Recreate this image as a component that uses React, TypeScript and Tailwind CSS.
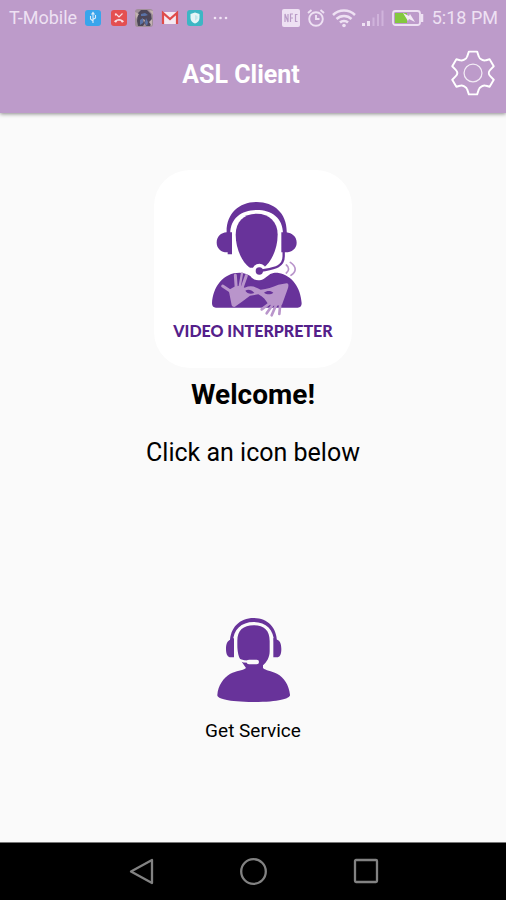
import React from "react";

function StatusIcons() {
  return (
    <div className="flex items-center gap-2">
      {/* usb */}
      <svg className="h-4 w-4" viewBox="0 0 16 16">
        <rect width="16" height="16" rx="3" fill="#38a5ec" />
        <path d="M8 3v10M5.500 6v3L8 11M10.500 5v3L8 9.500M6.500 4.500L8 2.500l1.500 2" fill="none" stroke="#d9ecfb" strokeWidth="1.100" />
      </svg>
      {/* missed call */}
      <svg className="ml-0.5 h-4 w-4" viewBox="0 0 16 16">
        <rect width="16" height="16" rx="3" fill="#e44f50" />
        <path d="M4.500 3.500L8 7l3.500-3.500M4.500 3.500v2" fill="none" stroke="#f8dfe3" strokeWidth="1.200" />
        <path d="M3 11.500c2-3.500 8-3.500 10 0l-2 1.200-1.500-2h-3l-1.500 2z" fill="#f8dfe3" />
      </svg>
      {/* game */}
      <svg className="h-[18px] w-[18px]" viewBox="0 0 18 18">
        <rect width="18" height="18" rx="3" fill="#a08f98" />
        <path d="M3 4l3-3 6 0 4 4 1 7-2 5h-4l-1-3-2 3H3L2 12z" fill="#4c4658" />
        <path d="M6 5l4-1 3 2-3 1H6zM5 11l3-2v5l-3 2zM11 9l2 4-1 4-2-3z" fill="#5a72a6" />
        <path d="M0 3l4 2-3 5zM14 1l4 1v4zM14 13l3-3v7zM8 10l2 1-1 3z" fill="#c3b2b2" />
      </svg>
      {/* mail */}
      <svg className="h-4 w-[18px]" viewBox="0 0 18 16">
        <rect x="1" y="2" width="16" height="12" rx="1" fill="#f4e9f2" />
        <path d="M2 14V3l7 6 7-6v11" fill="none" stroke="#df4c4b" strokeWidth="2.200" />
      </svg>
      {/* shield */}
      <svg className="h-4 w-4" viewBox="0 0 16 16">
        <rect width="16" height="16" rx="3" fill="#3db6c4" />
        <path d="M8 2.500l4.500 1.500v4c0 3-2 4.500-4.500 5.500C5.500 12.500 3.500 11 3.500 8V4z" fill="#e6f5f7" />
        <path d="M8 5l2.500 1v2.500L8 11z" fill="#c4e7ec" />
      </svg>
      <svg className="ml-0.5 h-4 w-4" viewBox="0 0 16 16" fill="#f1e4f5">
        <circle cx="2" cy="8" r="1.300" />
        <circle cx="7.500" cy="8" r="1.300" />
        <circle cx="13" cy="8" r="1.300" />
      </svg>
    </div>
  );
}

function SystemIcons() {
  return (
    <div className="flex items-center gap-[7px]">
      {/* nfc */}
      <svg className="h-[18px] w-[18px]" viewBox="0 0 18 18">
        <rect width="18" height="18" rx="2" fill="#eee1f3" />
        <path d="M3 13V5l3 8V5M8.500 13V5H11M8.500 9H11M15.500 5.500h-2v7h2" fill="none" stroke="#b99bc7" strokeWidth="1.200" />
      </svg>
      {/* alarm */}
      <svg className="h-[18px] w-[18px]" viewBox="0 0 18 18" fill="none" stroke="#eee1f3" strokeWidth="1.900">
        <circle cx="9" cy="10" r="6.800" />
        <path d="M9 6v4h3.500M1 4l3.500-3M17 4l-3.500-3" />
      </svg>
      {/* wifi */}
      <svg className="h-5 w-6" viewBox="0 0 24 20" fill="none" stroke="#eee1f3" strokeWidth="2.500">
        <path d="M1 7c6-6 16-6 22 0M4.500 11c4-4 11-4 15 0M8 14.500c2-2 6-2 8 0" />
        <circle cx="12" cy="17.500" r="1.800" fill="#eee1f3" stroke="none" />
      </svg>
      {/* signal */}
      <svg className="-ml-0.5 h-[18px] w-6" viewBox="0 0 24 18">
        <path d="M1 14h3v3H1zM6 12h3v5H6z" fill="#eee1f3" />
        <path d="M11.500 8.500h2v8.500h-2zM16 5h2v12h-2zM20.500 1.500h2V17h-2z" fill="#d0b3db" />
      </svg>
      {/* battery */}
      <svg className="h-[18px] w-8" viewBox="0 0 32 18">
        <rect x="1" y="2" width="27" height="14" rx="2.500" fill="none" stroke="#eee1f3" strokeWidth="1.800" />
        <path d="M30 5v8" stroke="#eee1f3" strokeWidth="2.500" />
        <path d="M3 4h12v10H3z" fill="#83c83f" />
        <path d="M11 4l6 3 1-2 5 8-6-3-1 2z" fill="#f4eaf6" />
      </svg>
    </div>
  );
}

function GearIcon() {
  return (
    <svg className="h-[46px] w-[46px]" viewBox="0 0 144 144" fill="none" stroke="#fff" strokeLinejoin="round">
      <path
        d="M59 5h26l5 15c2 8 15 15 23 12l11-3 13 22-11 11c-6 6-6 14 0 20l11 11-13 22-11-3c-8-3-21 4-23 12l-5 15H59l-5-15c-2-8-15-15-23-12l-11 3L7 93l11-11c6-6 6-14 0-20L7 51l13-22 11 3c8 3 21-4 23-12z"
        strokeWidth="6"
      />
      <circle cx="72" cy="72" r="28" strokeWidth="4" strokeOpacity="0.8" />
    </svg>
  );
}

function InterpreterLogo() {
  return (
    <svg className="h-[130px] w-[110px]" viewBox="-8 0 330 390">
      <g fill="#68339a">
        <path d="M168 71c38 0 63 24 63 63 0 45-22 87-43 99h-40c-21-12-43-54-43-99 0-39 25-63 63-63z" />
        <path d="M78 131C75 72 114 36 168 36s93 36 90 95h-11c0-47-34-71-79-71s-79 24-79 71z" />
        <path d="M94 127v66H81v-6c-18 1-33-11-33-29s13-30 30-31zM242 127v60h13c18 0 33-11 33-29s-14-29-31-31z" />
        <path d="M34 340c3-51 34-92 83-92 12 0 23 4 32 10 9 13 26 17 41 8l19-14c10-4 18-5 25-3 39 7 66 42 69 91 0 8-4 13-12 13H46c-8 0-12-5-12-13z" />
      </g>
      <circle cx="176" cy="242" r="21" fill="#fff" />
      <path d="M180 243c37-8 69-7 69-44v-8" fill="none" stroke="#fff" strokeWidth="13" />
      <path d="M178 243c37-8 71-9 71-44v-14" fill="none" stroke="#68339a" strokeWidth="7" />
      <circle cx="176" cy="243" r="11" fill="#68339a" />
      <path d="M257 225c9 7 9 17 0 24M269 217c19 12 19 29 2 39" fill="none" stroke="#b995cb" strokeWidth="5" strokeLinecap="round" />
      {/* signing hands */}
      <g fill="none" stroke="#b995cb" strokeLinecap="round">
        <path d="M66 288l26 17M104 256l3 42M137 257l-15 42" strokeWidth="9" />
        <path d="M124 250l-7 40" strokeWidth="7" />
        <path d="M210 338l-27 20M217 343l-19 27M226 346l-13 30M239 340l-3 32" strokeWidth="8" />
      </g>
      <g fill="#b995cb">
        <path d="M84 300l17-10c10-3 21-2 31 3 15-6 27-5 39 2l9 4c19-2 35-8 53-15l25-4c7 0 6 9 3 17l-17 47-20 4-21-5c-7-11-16-24-30-30l-25 4-22 17-20 14c-4 5-10 4-13-2z" />
      </g>
      <path d="M134 302c8-5 19-3 27 7-11 4-22 2-27-7zM190 308c9-7 21-6 28 0-8 6-19 6-28 0z" fill="#68339a" />
    </svg>
  );
}

function AgentIcon() {
  return (
    <svg className="h-[90px] w-[78px]" viewBox="42 30 234 270">
      <g fill="#68339a">
        <path d="M112 108c0-32 18-47 49-47s48 15 48 47v31c0 18-9 33-20 42v8c8 8 24 8 42 17 21 11 36 34 39 63 2 11-32 22-110 22S50 280 52 270c2-29 18-51 39-64 18-9 36-8 47-17l-14-20c-8-13-12-28-12-50z" />
        <path d="M90 112c0-44 29-73 71-73s70 29 70 73h-9c0-38-24-61-61-61s-62 23-62 61z" />
        <path d="M102 99v58H92c-8 0-14-8-14-25s5-26 14-28zM220 99v58h11c8 0 13-8 13-25s-5-26-13-28z" />
      </g>
      <path d="M106 153c5 10 20 17 40 17" fill="none" stroke="#fafafa" strokeWidth="7" />
      <rect x="140" y="164" width="37" height="14" rx="7" fill="#fafafa" />
    </svg>
  );
}

function Header() {
  return (
    <header className="relative bg-[#bd9bca] shadow-[0_1px_4px_rgba(0,0,0,0.45)]">
      <div className="flex h-9 items-center justify-between pl-[9px] pr-2 text-lg text-[#eee1f3]">
        <div className="flex items-center gap-2">
          <span>T-Mobile</span>
          <StatusIcons />
        </div>
        <div className="flex items-center gap-2">
          <SystemIcons />
          <span>5:18 PM</span>
        </div>
      </div>
      <div className="grid h-[77px] grid-cols-[1fr_auto_1fr] items-center px-[10px]">
        <h1 className="col-start-2 mr-6 text-[25px] font-bold text-white">ASL Client</h1>
        <button aria-label="Settings" className="justify-self-end pb-1">
          <GearIcon />
        </button>
      </div>
    </header>
  );
}

function NavBar() {
  return (
    <nav className="flex h-[58px] items-center justify-center gap-[84px] border-t border-[#777] bg-black">
      <button aria-label="Back">
        <svg className="h-7 w-7" viewBox="0 0 28 28" fill="none" stroke="#828282" strokeWidth="2.300" strokeLinejoin="round">
          <path d="M4 13.500L25 2v23z" />
        </svg>
      </button>
      <button aria-label="Home">
        <svg className="h-7 w-7" viewBox="0 0 28 28" fill="none" stroke="#828282" strokeWidth="2.300">
          <circle cx="14.500" cy="13.500" r="12.300" />
        </svg>
      </button>
      <button aria-label="Recent apps">
        <svg className="h-7 w-7" viewBox="0 0 28 28" fill="none" stroke="#828282" strokeWidth="2.300" strokeLinejoin="round">
          <rect x="4" y="2" width="22" height="22" rx="1" />
        </svg>
      </button>
    </nav>
  );
}

export default function App() {
  return (
    <div className="flex min-h-screen flex-col bg-[#fafafa] font-['Roboto',sans-serif]">
      <Header />
      <main className="flex flex-1 flex-col items-center pt-[57px] text-black">
        <div className="flex h-[198px] w-[198px] flex-col items-center rounded-[36px] bg-white pt-5">
          <InterpreterLogo />
          <p className="font-['Lato',sans-serif] text-base font-black leading-[22px] text-[#54208a]">VIDEO INTERPRETER</p>
        </div>
        <h2 className="mt-[9px] text-[28px] font-bold leading-9">Welcome!</h2>
        <p className="mt-[22px] text-[25px] leading-9">Click an icon below</p>
        <button className="mt-36 flex flex-col items-center gap-[14px]">
          <AgentIcon />
          <span className="text-[19px] leading-6">Get Service</span>
        </button>
      </main>
      <NavBar />
    </div>
  );
}
